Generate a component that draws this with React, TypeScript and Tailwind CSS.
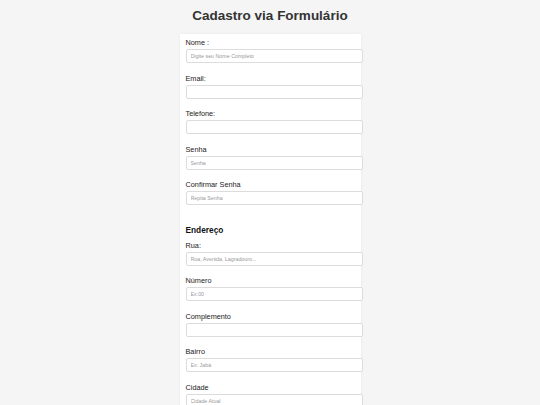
import React from "react";

const font = { fontFamily: '"Liberation Sans", Arial, sans-serif' };

function Field({ label, placeholder }: { label: string; placeholder?: string }) {
  return (
    <div className="mb-[10.5px]">
      <label className="block text-[7.3px] leading-[10px] text-[#222] mb-[1px]">{label}</label>
      <input
        className="block w-[177px] h-[14px] border border-[#dcdcdc] rounded-[2px] bg-white px-[4px] text-[5.3px] text-[#333] placeholder:text-[#999] outline-none"
        placeholder={placeholder}
      />
    </div>
  );
}

export default function App() {
  return (
    <div className="min-h-[405px] bg-[#f5f5f5] overflow-hidden antialiased" style={font}>
      <h1 className="text-center text-[13.5px] leading-[16px] font-bold text-[#333] pt-[8px] pb-[10px]">
        Cadastro via Formulário
      </h1>
      <div className="mx-auto w-[181px] bg-white shadow-[0_0_3px_rgba(0,0,0,0.06)] pl-[6px] pt-[4px] pb-[20px]">
        <Field label="Nome :" placeholder="Digite seu Nome Completo" />
        <Field label="Email:" />
        <Field label="Telefone:" />
        <Field label="Senha" placeholder="Senha" />
        <Field label="Confirmar Senha" placeholder="Repita Senha" />
        <h2 className="text-[8.3px] leading-[12px] font-bold text-[#111] mt-[18.5px] mb-[5px]">Endereço</h2>
        <Field label="Rua:" placeholder="Rua, Avenida, Lagradouro..." />
        <Field label="Número" placeholder="Ex:00" />
        <Field label="Complemento" />
        <Field label="Bairro" placeholder="Ex: Jabá" />
        <Field label="Cidade" placeholder="Cidade Atual" />
      </div>
    </div>
  );
}
